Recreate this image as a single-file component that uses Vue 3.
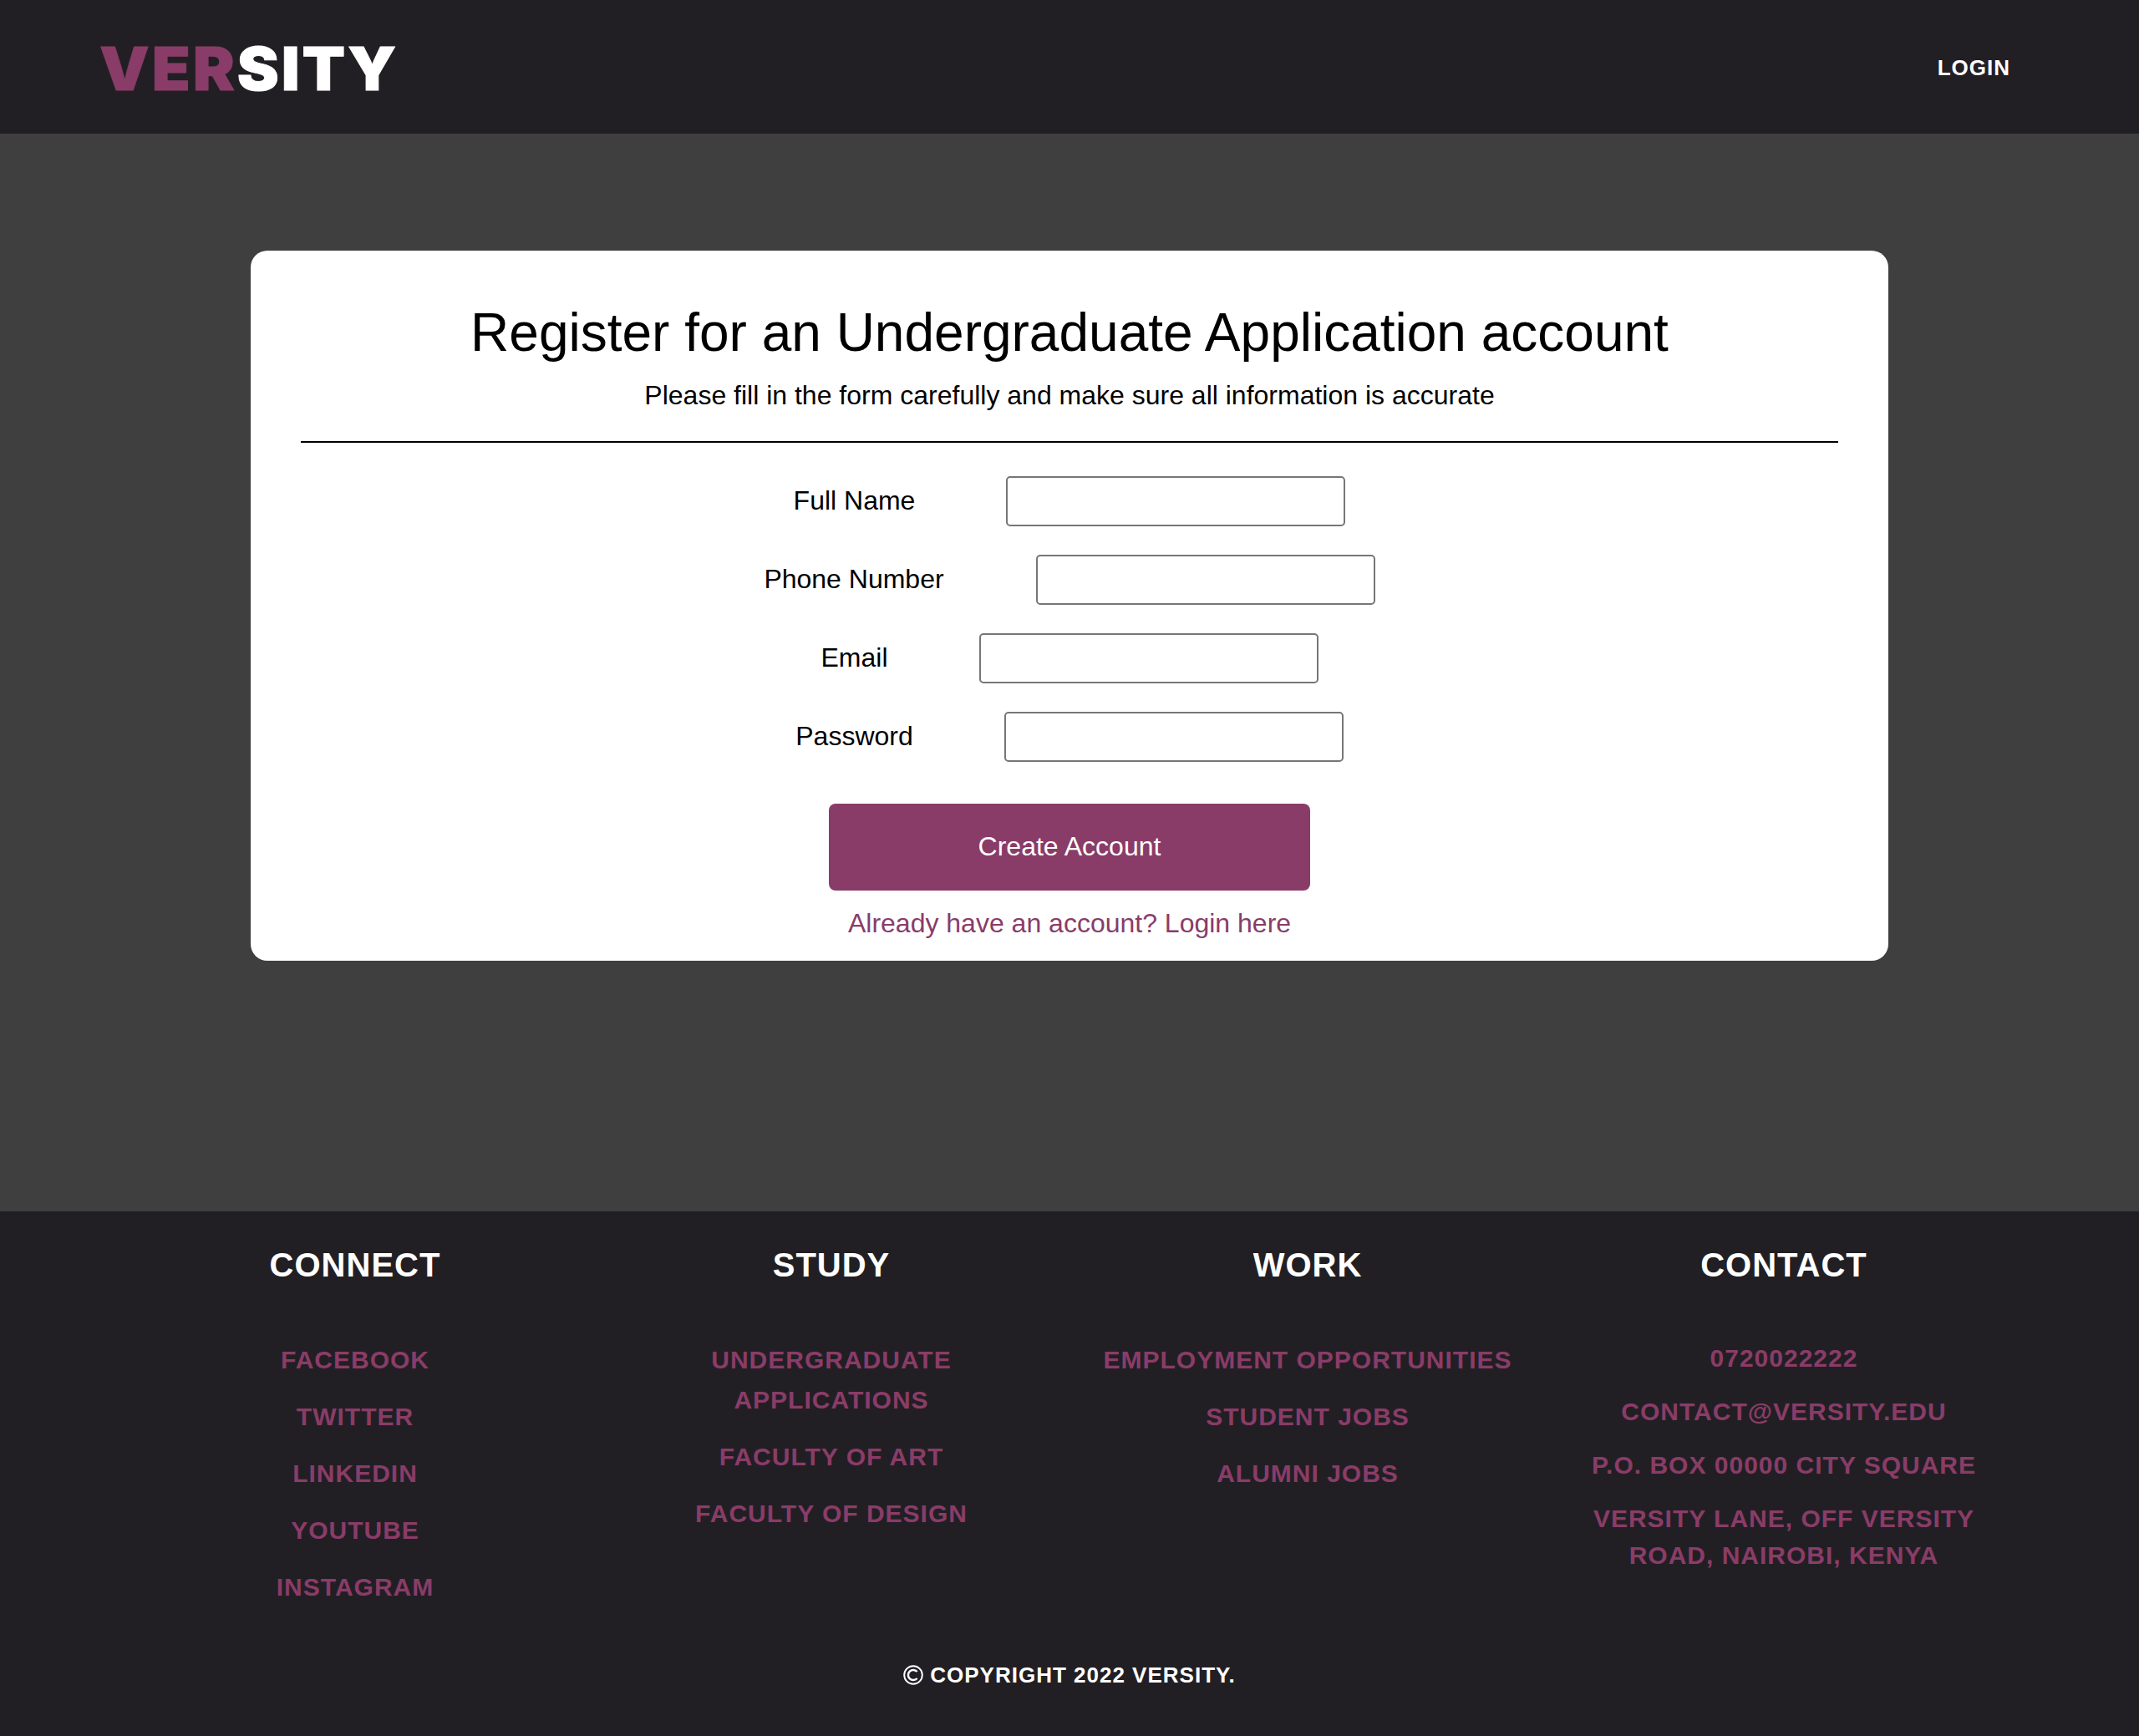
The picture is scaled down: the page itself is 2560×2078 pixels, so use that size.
<script setup>
const fields = [
  { id: 'name', label: 'Full Name', type: 'text' },
  { id: 'phone', label: 'Phone Number', type: 'text' },
  { id: 'email', label: 'Email', type: 'email' },
  { id: 'password', label: 'Password', type: 'password' },
]
const columns = [
  { title: 'Connect', items: ['Facebook', 'Twitter', 'LinkedIn', 'YouTube', 'Instagram'] },
  { title: 'Study', items: ['Undergraduate Applications', 'Faculty of Art', 'Faculty of Design'] },
  { title: 'Work', items: ['Employment Opportunities', 'Student Jobs', 'Alumni Jobs'] },
  { title: 'Contact', contact: true, items: ['0720022222', 'contact@versity.edu', 'P.O. Box 00000 City Square', 'Versity Lane, off Versity Road, Nairobi, Kenya'] },
]
</script>

<template>
  <div class="page">
    <header class="nav">
      <div class="logo"><span>VER</span>SITY</div>
      <a class="login">LOGIN</a>
    </header>
    <main>
      <form class="card" @submit.prevent>
        <h1>Register for an Undergraduate Application account</h1>
        <p class="intro">Please fill in the form carefully and make sure all information is accurate</p>
        <hr />
        <div v-for="f in fields" :key="f.id" class="field">
          <label :for="f.id">{{ f.label }}</label>
          <input :id="f.id" :type="f.type" />
        </div>
        <button type="submit">Create Account</button>
        <a class="have">Already have an account? Login here</a>
      </form>
    </main>
    <footer>
      <div class="columns">
        <section v-for="c in columns" :key="c.title" :class="{ contact: c.contact }">
          <h2>{{ c.title }}</h2>
          <ul>
            <li v-for="item in c.items" :key="item">{{ item }}</li>
          </ul>
        </section>
      </div>
      <p class="copy">
        <svg viewBox="0 0 24 24" width="24" height="24" fill="none" stroke="#fff" stroke-width="1.9">
          <circle cx="12" cy="12" r="10.8" />
          <path d="M16.6 8A6.1 6.1 0 1 0 16.6 16" stroke-width="2.5" />
        </svg>
        Copyright 2022 Versity.
      </p>
    </footer>
  </div>
</template>

<style>
body { margin: 0; background: #3f3f3f; }
</style>
<style scoped>
* { box-sizing: border-box; }
.page { font-family: "Liberation Sans", Arial, sans-serif; font-size: 32px; color: #000; height: 2078px; display: flex; flex-direction: column; }
.nav { height: 160px; background: #221f24; display: flex; align-items: center; justify-content: space-between; padding: 0 154px 0 119px; }
.logo { color: #fff; font-family: Inter, "Arial Black", sans-serif; font-weight: 900; font-size: 71px; line-height: 80px; letter-spacing: 2.7px; margin-top: 4px; transform: scaleX(1.06); transform-origin: left center; -webkit-text-stroke: 0.8px currentColor; }
.logo span { color: #8a3c68; }
.login { color: #fff; font-weight: 700; font-size: 26px; letter-spacing: 1px; margin-top: 2px; }
main { height: 1290px; padding-top: 140px; background: #3f3f3f; }
.card { width: 1960px; height: 850px; margin: 0 auto; padding: 60px; border-radius: 20px; background: #fff; text-align: center; display: flex; flex-direction: column; align-items: center; }
h1 { margin: 0; font-weight: 400; font-size: 64px; line-height: 76px; }
.intro { margin: 18px 0 0; line-height: 38px; }
hr { width: 1840px; height: 2px; background: #000; border: 0; margin: 36px 0 40px; flex: none; }
.field { height: 60px; margin-bottom: 34px; display: flex; align-items: center; flex: none; }
.field label { line-height: 36px; padding-bottom: 2px; }
.field input { width: 406px; height: 60px; margin-left: 109px; border: 2px solid #767676; border-radius: 5px; background: #fff; }
#phone { margin-left: 110px; }
button { width: 576px; height: 104px; margin-top: 16px; padding: 0 0 2px; border: 0; border-radius: 8px; background: #8a3c68; color: #fff; font: 32px "Liberation Sans", Arial, sans-serif; flex: none; }
.have { color: #8a3c68; margin-top: 20px; line-height: 38px; }
footer { height: 628px; background: #221f24; text-transform: uppercase; font-weight: 700; text-align: center; }
.columns { height: 520px; padding: 40px 140px 0; display: grid; grid-template-columns: repeat(4, 570px); }
h2 { margin: 0; color: #fff; font-size: 40px; line-height: 48px; letter-spacing: 1px; }
ul { list-style: none; margin: 66px auto 0; padding: 0; width: 500px; color: #8a3c68; font-size: 30px; letter-spacing: 1px; }
li { line-height: 48px; margin-bottom: 20px; }
.contact li { line-height: 44px; }
.copy { color: #fff; margin: 20px 0 0; font-size: 26px; line-height: 30px; letter-spacing: 1px; display: flex; align-items: center; justify-content: center; gap: 8px; }
</style>
